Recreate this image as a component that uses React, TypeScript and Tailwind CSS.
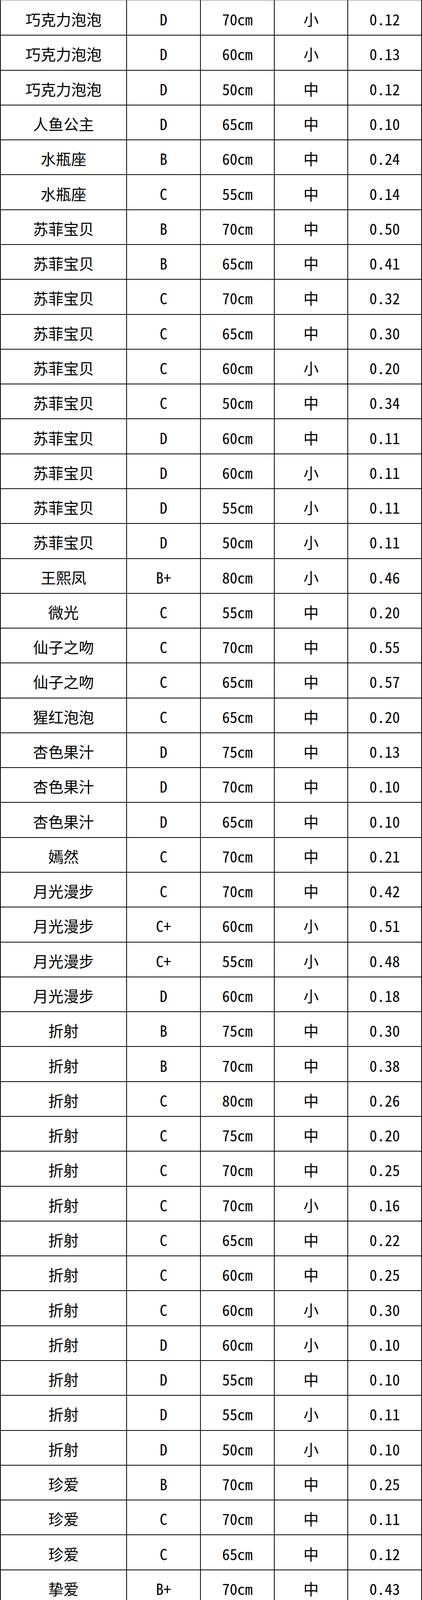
const rows: [string, string, string, string, string][] = [
    ["巧克力泡泡", "D", "70cm", "小", "0.12"],
    ["巧克力泡泡", "D", "60cm", "小", "0.13"],
    ["巧克力泡泡", "D", "50cm", "中", "0.12"],
    ["人鱼公主", "D", "65cm", "中", "0.10"],
    ["水瓶座", "B", "60cm", "中", "0.24"],
    ["水瓶座", "C", "55cm", "中", "0.14"],
    ["苏菲宝贝", "B", "70cm", "中", "0.50"],
    ["苏菲宝贝", "B", "65cm", "中", "0.41"],
    ["苏菲宝贝", "C", "70cm", "中", "0.32"],
    ["苏菲宝贝", "C", "65cm", "中", "0.30"],
    ["苏菲宝贝", "C", "60cm", "小", "0.20"],
    ["苏菲宝贝", "C", "50cm", "中", "0.34"],
    ["苏菲宝贝", "D", "60cm", "中", "0.11"],
    ["苏菲宝贝", "D", "60cm", "小", "0.11"],
    ["苏菲宝贝", "D", "55cm", "小", "0.11"],
    ["苏菲宝贝", "D", "50cm", "小", "0.11"],
    ["王熙凤", "B+", "80cm", "小", "0.46"],
    ["微光", "C", "55cm", "中", "0.20"],
    ["仙子之吻", "C", "70cm", "中", "0.55"],
    ["仙子之吻", "C", "65cm", "中", "0.57"],
    ["猩红泡泡", "C", "65cm", "中", "0.20"],
    ["杏色果汁", "D", "75cm", "中", "0.13"],
    ["杏色果汁", "D", "70cm", "中", "0.10"],
    ["杏色果汁", "D", "65cm", "中", "0.10"],
    ["嫣然", "C", "70cm", "中", "0.21"],
    ["月光漫步", "C", "70cm", "中", "0.42"],
    ["月光漫步", "C+", "60cm", "小", "0.51"],
    ["月光漫步", "C+", "55cm", "小", "0.48"],
    ["月光漫步", "D", "60cm", "小", "0.18"],
    ["折射", "B", "75cm", "中", "0.30"],
    ["折射", "B", "70cm", "中", "0.38"],
    ["折射", "C", "80cm", "中", "0.26"],
    ["折射", "C", "75cm", "中", "0.20"],
    ["折射", "C", "70cm", "中", "0.25"],
    ["折射", "C", "70cm", "小", "0.16"],
    ["折射", "C", "65cm", "中", "0.22"],
    ["折射", "C", "60cm", "中", "0.25"],
    ["折射", "C", "60cm", "小", "0.30"],
    ["折射", "D", "60cm", "小", "0.10"],
    ["折射", "D", "55cm", "中", "0.10"],
    ["折射", "D", "55cm", "小", "0.11"],
    ["折射", "D", "50cm", "小", "0.10"],
    ["珍爱", "B", "70cm", "中", "0.25"],
    ["珍爱", "C", "70cm", "中", "0.11"],
    ["珍爱", "C", "65cm", "中", "0.12"],
    ["挚爱", "B+", "70cm", "中", "0.43"],
    ["挚爱", "C+", "60cm", "中", "0.25"],
    ["紫霞仙子", "A+", "75cm", "中", "0.66"],
    ["紫霞仙子", "A+", "70cm", "中", "0.63"],
    ["紫霞仙子", "B+", "80cm", "小", "0.63"],
    ["紫霞仙子", "B+", "70cm", "小", "0.59"],
    ["紫霞仙子", "B+", "65cm", "中", "0.60"],
    ["紫霞仙子", "C", "60cm", "中", "0.47"],
    ["紫霞仙子", "C+", "65cm", "中", "0.50"],
    ["紫霞仙子", "C+", "60cm", "小", "0.43"],
    ["紫霞仙子", "C+", "60cm", "中", "0.45"],
    ["紫霞仙子", "C+", "55cm", "中", "0.46"],
    ["紫霞仙子", "D+", "50cm", "中", "0.32"],
    ["紫霞仙子", "D+", "50cm", "小", "0.32"],
    ["紫霞仙子", "D+", "40cm", "中", "0.28"],
    ["自由", "C", "80cm", "中", "0.18"],
    ["自由", "C", "70cm", "中", "0.18"],
    ["自由", "D", "70cm", "中", "0.11"],
    ["自由", "D", "60cm", "中", "0.11"],
];

export default function App() {
    return (
        <div className="grid grid-rows-[repeat(64,minmax(0,1fr))] w-[1080px] h-[5716px] overflow-hidden bg-white text-black border-r-2 border-b-2 border-black font-['Noto_Sans_Mono_CJK_SC','Noto_Sans_CJK_SC',sans-serif] text-[39px] leading-none">
            {rows.map((r, i) => (
                <div
                    key={i}
                    className={`grid grid-cols-[323px_189px_189px_188px_189px] min-h-0 ${i === 0 ? "border-t border-gray-500" : "border-t-2 border-black"}`}
                >
                    {r.map((cell, j) => (
                        <div key={j} className="flex items-center justify-center border-l-2 border-black pt-[6px]">
                            {cell}
                        </div>
                    ))}
                </div>
            ))}
        </div>
    );
}
